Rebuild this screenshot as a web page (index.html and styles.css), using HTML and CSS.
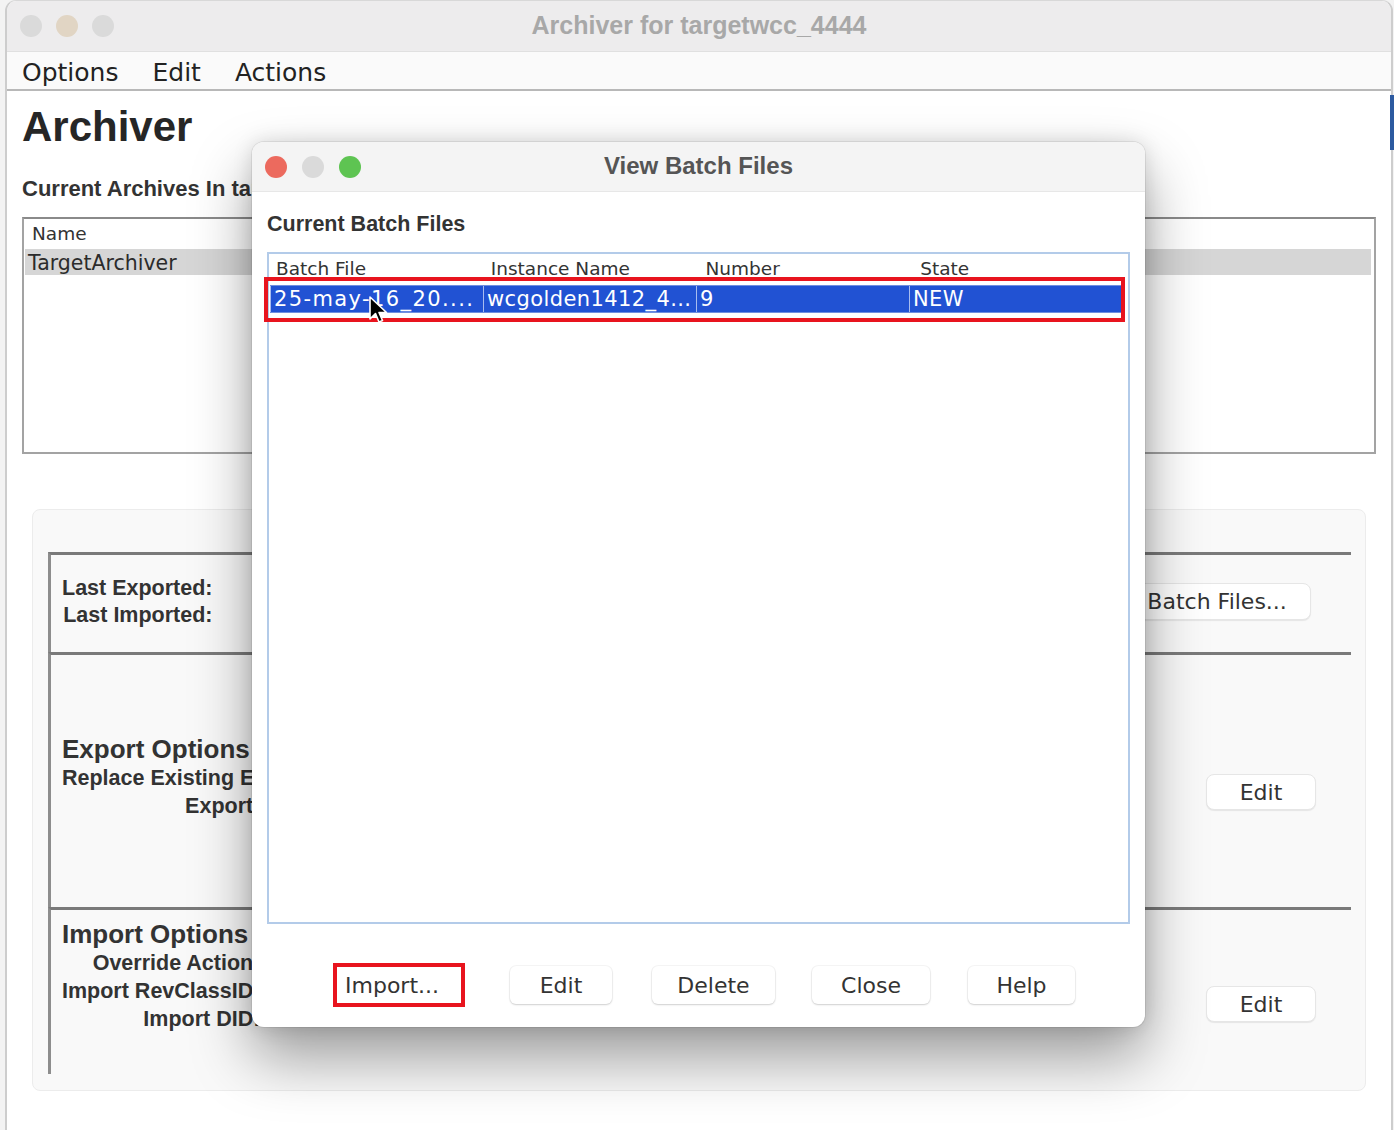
FILE: index.html
```html
<!DOCTYPE html>
<html>
<head>
<meta charset="utf-8">
<title>Archiver</title>
<link rel="stylesheet" href="styles.css">
</head>
<body>
<div class="window">
  <div class="titlebar">
    <div class="lights"><span class="light"></span><span class="light tan"></span><span class="light"></span></div>
    <div class="title">Archiver for targetwcc_4444</div>
  </div>
  <div class="menubar"><span>Options</span><span>Edit</span><span>Actions</span></div>
  <div class="content">
    <h1 class="app-title">Archiver</h1>
    <div class="section-label">Current Archives In targetwcc_4444</div>
    <div class="list">
      <div class="list-head">Name</div>
      <div class="list-row">TargetArchiver</div>
    </div>
    <div class="panel">
      <div class="group g1">
        <div class="labels">
          <div>Last Exported:</div>
          <div>Last Imported:</div>
        </div>
        <button class="btn batch">View Batch Files...</button>
      </div>
      <div class="group g2">
        <div class="opts">
          <div class="opts-head">Export Options</div>
          <div class="labels">
            <div>Replace Existing Exports:</div>
            <div>Export Depth:</div>
          </div>
        </div>
        <button class="btn edit e2">Edit</button>
      </div>
      <div class="group g3">
        <div class="opts">
          <div class="opts-head">Import Options</div>
          <div class="labels">
            <div>Override Action:</div>
            <div>Import RevClassID:</div>
            <div>Import DID:</div>
          </div>
        </div>
        <button class="btn edit e3">Edit</button>
      </div>
    </div>
  </div>
</div>
<span class="edge-blue"></span>

<div class="dialog">
  <div class="dlg-title">
    <div class="lights dlg-lights"><span class="light red"></span><span class="light"></span><span class="light green"></span></div>
    <div class="title dtitle">View Batch Files</div>
  </div>
  <div class="dlg-body">
    <div class="dlg-label">Current Batch Files</div>
    <div class="table">
      <div class="thead">
        <div>Batch File</div><div>Instance Name</div><div>Number</div><div>State</div>
      </div>
      <div class="trow">
        <div class="c1">25-may-16_20....</div><div>wcgolden1412_4...</div><div>9</div><div>NEW</div>
      </div>
      <span class="hl-row"></span>
    </div>
    <div class="footer">
      <button class="dbtn b-import">Import...</button>
      <button class="dbtn b-edit">Edit</button>
      <button class="dbtn b-delete">Delete</button>
      <button class="dbtn b-close">Close</button>
      <button class="dbtn b-help">Help</button>
    </div>
  </div>
</div>

<svg class="cursor" width="22" height="32" viewBox="0 0 22 32" xmlns="http://www.w3.org/2000/svg">
  <path d="M2 2 L2 24 L7.5 18.5 L11 27 L14.5 25.5 L11 17.5 L18.5 17.5 Z" fill="#000" stroke="#fff" stroke-width="1.6" stroke-linejoin="round"/>
</svg>
</body>
</html>
```

FILE: styles.css
```css
* { box-sizing: border-box; }
html, body { margin: 0; padding: 0; }
body {
  width: 1394px;
  height: 1130px;
  overflow: hidden;
  position: relative;
  background: #f3f3f3;
  font-family: "DejaVu Sans", sans-serif;
  color: #2b2b2b;
}

/* main window */
.window {
  margin-left: 5px;
  width: 1388px;
  height: 1150px;
  background: #fff;
  border-left: 2px solid #cdcdcd;
  border-right: 2px solid #cdcdcd;
  border-top: 1px solid #d8d8d8;
  border-radius: 11px 11px 0 0;
  overflow: hidden;
}
.titlebar {
  height: 51px;
  background: #edeced;
  border-bottom: 1px solid #e0e0e0;
  display: flex;
  align-items: center;
  position: relative;
}
.lights { display: flex; gap: 14px; padding-left: 13px; position: relative; z-index: 1; }
.light { width: 22px; height: 22px; border-radius: 50%; background: #dadada; }
.light.tan { background: #e1d5c4; }
.light.red { background: #ec6a5e; }
.light.green { background: #5ec452; }
.title {
  position: absolute;
  left: 0; right: 0;
  text-align: center;
  font: bold 25px "Liberation Sans", Arial, sans-serif;
  color: #a8a8a8;
  margin-top: -2px;
}
.menubar {
  height: 39px;
  background: #fafafa;
  border-bottom: 2px solid #b8b8b8;
  display: flex;
  align-items: center;
  gap: 34px;
  padding: 3px 0 0 15px;
  font-size: 25px;
  color: #222;
}
.content { padding: 0 15px; }
.app-title {
  margin: 12px 0 0;
  font: bold 42px/48px "Liberation Sans", Arial, sans-serif;
  color: #262626;
}
.section-label {
  margin-top: 25px;
  font: bold 22px/26px "Liberation Sans", Arial, sans-serif;
  color: #333;
  white-space: nowrap;
}
.list {
  margin-top: 15px;
  height: 237px;
  border: 2px solid #a3a3a3;
  border-top-color: #8a8a8a;
  padding: 1px 3px 0 1px;
}
.list-head {
  height: 29px;
  line-height: 27px;
  padding-left: 7px;
  font-size: 18.5px;
  color: #333;
}
.list-row {
  height: 26px;
  line-height: 28px;
  background: #d6d6d6;
  padding-left: 3px;
  font-size: 20.5px;
  color: #2b2b2b;
}
.panel {
  margin: 55px 10px 0;
  height: 582px;
  background: #f9f9f9;
  border: 1px solid #ececec;
  border-radius: 8px;
  padding: 42px 14px 0 15px;
  display: flex;
  flex-direction: column;
}
.group {
  border-top: 3px solid #7a7a7a;
  border-left: 3px solid #8d8d8d;
  display: flex;
  justify-content: space-between;
  padding-left: 11px;
}
.g1 { height: 100px; align-items: center; padding-right: 40px; padding-bottom: 4px; }
.g2 { height: 255px; align-items: center; padding-right: 35px; padding-bottom: 9px; }
.g3 { height: 167px; align-items: flex-start; padding-right: 35px; padding-top: 9px; }
.labels {
  display: grid;
  justify-items: end;
  font: bold 21.5px/27px "Liberation Sans", Arial, sans-serif;
  color: #333;
  white-space: nowrap;
}
.g2 .labels, .g3 .labels { line-height: 28px; }
.opts-head {
  font: bold 26px/30px "Liberation Sans", Arial, sans-serif;
  color: #333;
}
.btn {
  background: #fff;
  border: 1px solid #e6e6e6;
  border-radius: 8px;
  box-shadow: 0 1px 1px rgba(0,0,0,.08);
  font: 22px "DejaVu Sans", sans-serif;
  color: #333;
  padding: 0;
}
.batch { width: 247px; height: 37px; }
.edit { width: 110px; height: 36px; }
.e2 { margin-top: 31px; }
.e3 { margin-top: 67px; }

.edge-blue {
  position: absolute;
  left: 1390px; top: 95px;
  width: 4px; height: 55px;
  background: #2c5aa0;
}

/* dialog */
.dialog {
  position: absolute;
  left: 252px; top: 142px;
  width: 893px; height: 885px;
  background: #fff;
  border-radius: 12px;
  box-shadow: 0 30px 60px rgba(0,0,0,.38), 0 0 20px rgba(0,0,0,.13), 0 0 0 1px rgba(0,0,0,.07);
  display: flex;
  flex-direction: column;
  overflow: hidden;
}
.dlg-title {
  height: 50px;
  background: #f4f4f4;
  border-bottom: 1px solid #e7e7e7;
  display: flex;
  align-items: center;
  position: relative;
}
.dlg-lights { gap: 15px; }
.dtitle { font-size: 24px; color: #555; }
.dlg-body { flex: 1; padding: 0 15px; display: flex; flex-direction: column; }
.dlg-label {
  margin-top: 19px;
  font: bold 21.5px/26px "Liberation Sans", Arial, sans-serif;
  color: #333;
}
.table {
  margin-top: 15px;
  height: 672px;
  border: 2px solid #b3cbe9;
  position: relative;
}
.thead, .trow {
  display: grid;
  grid-template-columns: repeat(4, 1fr);
  white-space: nowrap;
}
.thead {
  height: 30px;
  line-height: 30px;
  font-size: 18.5px;
  color: #333;
}
.thead div { padding-left: 7px; }
.trow {
  margin: 1px 6px 0 1px;
  height: 28px;
  line-height: 28px;
  background: #2152d3;
  color: #fff;
  font-size: 21px;
  letter-spacing: 0.4px;
  border-top: 1px solid #6f8fe0;
  border-bottom: 1px solid #6f8fe0;
}
.trow div {
  padding-left: 3px;
  border-left: 1px solid #a8bcef;
  overflow: hidden;
  line-height: 26px;
}
.trow .c1 { letter-spacing: 1.4px; }
.hl-row {
  position: absolute;
  left: -5px; top: 23px;
  width: 861px; height: 45px;
  border: 4px solid #e8141e;
}
.footer {
  flex: 1;
  display: flex;
  align-items: center;
  padding: 19px 0 0 66px;
}
.dbtn {
  height: 38px;
  background: #fff;
  border: none;
  border-radius: 6px;
  box-shadow: 0 1px 2px rgba(0,0,0,.16), 0 0 0 1px rgba(0,0,0,.035);
  font: 22px "DejaVu Sans", sans-serif;
  color: #333;
  padding: 0;
}
.b-import {
  width: 132px; height: 44px;
  border: 4px solid #e8141e;
  border-radius: 0;
  box-shadow: none;
  text-align: left;
  padding-left: 8px;
}
.b-edit { width: 102px; margin-left: 45px; }
.b-delete { width: 123px; margin-left: 40px; }
.b-close { width: 118px; margin-left: 37px; }
.b-help { width: 107px; margin-left: 38px; }

.cursor {
  position: absolute;
  left: 368px; top: 295px;
}
```
